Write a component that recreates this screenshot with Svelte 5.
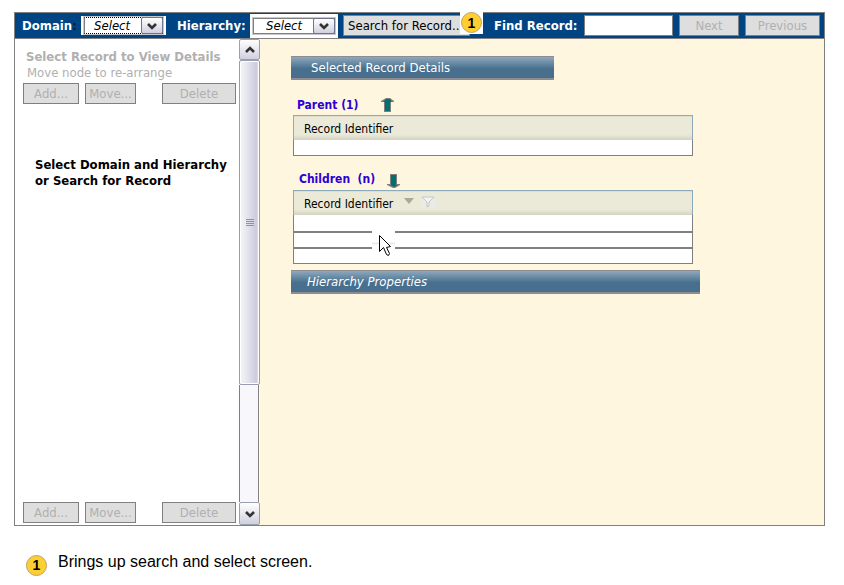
<script>
  let domain = $state('Select');
  let hierarchy = $state('Select');
  let query = $state('');
  const childRows = [1, 2, 3];
</script>

{#snippet chevron(up)}
  <svg class="chevron" viewBox="0 0 10 8" width="10" height="8" aria-hidden="true">
    <path d={up ? 'M1 6 L5 2 L9 6' : 'M1 2 L5 6 L9 2'} fill="none" stroke="#333" stroke-width="2.6" />
  </svg>
{/snippet}

{#snippet actions()}
  <div class="actions">
    <button class="btn add" disabled>Add...</button>
    <button class="btn move" disabled>Move...</button>
    <button class="btn delete" disabled>Delete</button>
  </div>
{/snippet}

<div class="page">
  <div class="window">
    <header>
      <label class="domain-label" for="domain">Domain<span class="colon">:</span></label>
      <div class="picker focused">
        <select id="domain" bind:value={domain}><option>Select</option></select>
        <span class="drop">{@render chevron(false)}</span>
      </div>
      <label class="hier-label" for="hierarchy">Hierarchy:</label>
      <div class="picker tall">
        <select id="hierarchy" bind:value={hierarchy}><option>Select</option></select>
        <span class="drop">{@render chevron(false)}</span>
      </div>
      <div class="search">
        <button class="btn search-btn">Search for Record..</button>
        <span class="patch"><span class="badge">1</span></span>
      </div>
      <label class="find-label" for="find">Find Record:</label>
      <input id="find" type="text" bind:value={query} />
      <button class="btn next" disabled>Next</button>
      <button class="btn previous" disabled>Previous</button>
    </header>

    <div class="body">
      <aside>
        <h2>Select Record to View Details</h2>
        <p class="hint">Move node to re-arrange</p>
        {@render actions()}
        <p class="prompt">Select Domain and Hierarchy<br />or Search for Record</p>
        {@render actions()}
      </aside>
      <div class="scrollbar">
        <button class="step" aria-label="Scroll up">{@render chevron(true)}</button>
        <div class="thumb"><span></span><span></span><span></span><span></span></div>
        <div class="track"></div>
        <button class="step down" aria-label="Scroll down">{@render chevron(false)}</button>
      </div>

      <main>
        <h3 class="bar details">Selected Record Details</h3>

        <h4>
          Parent (1)
          <svg class="up" width="14" height="14" viewBox="0 0 14 14" aria-hidden="true">
            <path d="M4 4 H3 V14 H10 V4 H13 V3 L9 0 H5 L0 3 V4Z" fill="#808080" />
            <path d="M4 4 H2 L5 1 H9 L11 4 H9 V13 H4Z" fill="#007070" />
          </svg>
        </h4>
        <table>
          <thead><tr><th>Record Identifier</th></tr></thead>
          <tbody><tr><td></td></tr></tbody>
        </table>

        <h4 class="children">
          Children&nbsp; (n)
          <svg class="downarrow" width="14" height="14" viewBox="0 0 14 14" aria-hidden="true">
            <path d="M3 0 H10 V10 H13 V11 L8 14 H6 L0 11 V10 H3Z" fill="#808080" />
            <path d="M4 1 H9 V11 H11 L7 13 L3 11 H4Z" fill="#007070" />
          </svg>
        </h4>
        <div class="grid">
          <table>
            <thead>
              <tr>
                <th>
                  Record Identifier
                  <svg class="sort" width="10" height="6" viewBox="0 0 10 6" aria-hidden="true">
                    <path d="M0 0 H10 L5 6Z" fill="#aaa999" />
                  </svg>
                  <svg class="filter" width="14" height="12" viewBox="0 0 14 12" aria-hidden="true">
                    <rect width="14" height="12" fill="#ebebe6" />
                    <path d="M1 1 H13 L8 6 V10 L6 11 V6Z" fill="#f4f4f2" stroke="#c4c4c4" />
                  </svg>
                </th>
              </tr>
            </thead>
            <tbody>
              {#each childRows as row (row)}
                <tr><td></td></tr>
              {/each}
            </tbody>
          </table>
          <svg class="cursor" width="23" height="27" viewBox="0 0 23 27" aria-hidden="true">
            <rect width="23" height="27" fill="#fff" />
            <path d="M0 13.5 H23" stroke="#e9ebeb" stroke-width="2" />
            <path d="M7.5 5.5 V21.5 L11.5 17.5 L14.5 24.5 L16.5 25.5 L17.5 23.5 L14.5 17.5 L18.5 16.5Z" fill="#fff" stroke="#000" />
          </svg>
        </div>

        <h3 class="bar properties">Hierarchy Properties</h3>
      </main>
    </div>
  </div>

  <footer>
    <span class="badge">1</span>
    <p>Brings up search and select screen.</p>
  </footer>
</div>

<style>
  :global(body) {
    background: #fff;
  }
  .page {
    box-sizing: border-box;
    min-height: 100vh;
    display: flex;
    flex-direction: column;
    padding: 12px 19px 7px 14px;
    font: 13px/16px 'DejaVu Sans Condensed', 'DejaVu Sans', sans-serif;
    color: #000;
  }
  h2, h3, h4, p {
    margin: 0;
  }
  button, input, select {
    box-sizing: border-box;
    margin: 0;
    font: inherit;
    color: inherit;
  }
  .window {
    flex: 1;
    display: flex;
    flex-direction: column;
    border: 1px solid #808080;
  }
  header {
    height: 25px;
    display: flex;
    align-items: center;
    background: #004484;
    border-bottom: 1px solid #808080;
  }
  label {
    font-weight: bold;
    font-size: 13px;
    color: #fff;
    white-space: nowrap;
    flex: none;
  }
  .domain-label {
    width: 59px;
    padding-left: 7px;
  }
  .colon {
    color: #101828;
  }
  .hier-label {
    width: 73px;
    padding-left: 11px;
  }
  .find-label {
    width: 90px;
    padding-left: 11px;
  }
  .picker {
    flex: none;
    box-sizing: border-box;
    width: 85px;
    height: 19px;
    padding: 1px 3px;
    display: grid;
    grid-template-columns: 1fr 22px;
    background: #fff;
  }
  .picker.tall {
    width: 88px;
    height: 24px;
    padding: 4px 3px;
  }
  select {
    appearance: none;
    grid-area: 1 / 1 / 2 / 3;
    width: 100%;
    height: 100%;
    padding: 0 22px 0 9px;
    border: 1px solid #808080;
    border-radius: 0;
    outline: 1px solid #c8c8cc;
    background: #fff;
    font-style: italic;
    line-height: 14px;
  }
  .tall select {
    padding-left: 12px;
  }
  .focused select {
    border-top: 1px dotted #000;
    border-bottom: 1px dotted #000;
  }
  .drop {
    grid-area: 1 / 2 / 2 / 3;
    z-index: 1;
    pointer-events: none;
    display: grid;
    place-items: center;
    border: 1px solid #6f7590;
    border-radius: 2px;
    background: linear-gradient(#fff, #d0d0e0);
  }
  .btn {
    flex: none;
    height: 21px;
    padding: 0;
    border: 1px solid #808080;
    background: #dedede;
    line-height: 16px;
    white-space: nowrap;
  }
  .btn:disabled {
    color: #b0b0b0;
  }
  .search {
    flex: none;
    display: flex;
    position: relative;
    width: 140px;
    padding-left: 5px;
  }
  .search-btn {
    width: 127px;
    padding-left: 4px;
    text-align: left;
  }
  .patch {
    position: absolute;
    right: 0;
    top: -3px;
    width: 23px;
    height: 22px;
    padding-left: 1px;
    box-sizing: border-box;
    background: #fff;
  }
  .badge {
    flex: none;
    box-sizing: border-box;
    display: grid;
    place-items: center;
    width: 21px;
    height: 21px;
    border: 1px solid #b9a468;
    border-radius: 50%;
    background: #ffcf31;
    font: bold 14px/18px 'Liberation Sans', Arial, sans-serif;
  }
  input {
    flex: 1;
    min-width: 40px;
    height: 21px;
    padding: 0 4px;
    border: 1px solid #808080;
    border-radius: 0;
    background: #fff;
  }
  .next {
    width: 60px;
    margin-left: 6px;
  }
  .previous {
    width: 75px;
    margin: 0 4px 0 6px;
  }
  .body {
    flex: 1;
    display: flex;
  }
  aside {
    flex: none;
    box-sizing: border-box;
    width: 224px;
    display: flex;
    flex-direction: column;
    padding: 10px 3px 2px 8px;
    background: #fff;
  }
  h2 {
    padding-left: 3px;
    font-size: 13px;
    line-height: 16px;
    color: #b0b0b0;
    white-space: nowrap;
  }
  .hint {
    padding-left: 4px;
    color: #b0b0b0;
  }
  .actions {
    display: flex;
    gap: 6px;
    margin-top: 2px;
  }
  .add {
    width: 56px;
  }
  .move {
    width: 51px;
  }
  .delete {
    width: 74px;
    margin-left: auto;
  }
  .prompt {
    flex: 1;
    padding: 53px 0 0 12px;
    font-weight: bold;
    white-space: nowrap;
  }
  .scrollbar {
    flex: none;
    width: 21px;
    display: flex;
    flex-direction: column;
  }
  .step {
    flex: none;
    width: 21px;
    height: 21px;
    padding: 0;
    display: grid;
    place-items: center;
    border: 1px solid #98a0b4;
    border-radius: 2px;
    background: linear-gradient(#fff, #d0d0de);
  }
  .down {
    height: 23px;
  }
  .thumb {
    flex: 324;
    box-sizing: border-box;
    display: flex;
    flex-direction: column;
    align-items: center;
    justify-content: center;
    gap: 1px;
    border: 1px solid #9a9cb0;
    border-radius: 2px;
    box-shadow: inset 0 0 0 1px #fff;
    background: linear-gradient(90deg, #f6f6f8, #e4e4ee 40%, #cbcbdd 85%, #e6e6f0);
  }
  .thumb span {
    width: 8px;
    height: 1px;
    background: #8c90a8;
  }
  .track {
    flex: 117;
    width: 18px;
    border: solid #808080;
    border-width: 0 1px;
    background: #f8f8fc;
  }
  main {
    flex: 1;
    min-width: 0;
    padding: 17px 31px 0;
    background: #fff6df;
  }
  .bar {
    box-sizing: border-box;
    height: 24px;
    border: solid #8c8c92;
    border-width: 1px 0 2px;
    background: linear-gradient(#8ea8bc, #48708e 55%);
    color: #fff;
    font-weight: normal;
    font-size: 13px;
    line-height: 22px;
  }
  .details {
    max-width: 263px;
    padding-left: 20px;
  }
  .properties {
    max-width: 409px;
    margin-top: 6px;
    padding-left: 16px;
    font-style: italic;
  }
  h4 {
    display: flex;
    align-items: center;
    height: 16px;
    margin-top: 17px;
    padding-left: 6px;
    font-size: 12px;
    color: #2a00d4;
  }
  .children {
    margin-top: 15px;
    padding-left: 8px;
  }
  .up {
    margin-left: 22px;
  }
  .downarrow {
    margin: 3px 0 0 12px;
  }
  table {
    width: 100%;
    max-width: 400px;
    margin: 2px 0 0 2px;
    border-collapse: collapse;
    background: #fff;
  }
  th {
    box-sizing: border-box;
    height: 24px;
    padding: 3px 0 0 10px;
    border: 1px solid #8caabc;
    border-bottom: 0;
    background: linear-gradient(#ebead9 75%, #d2d0c0);
    font-weight: normal;
    font-size: 12px;
    line-height: 16px;
    text-align: left;
  }
  td {
    box-sizing: border-box;
    height: 16px;
    padding: 0;
    border: 1px solid #808080;
    border-top: 0;
  }
  .grid {
    position: relative;
  }
  .grid table {
    margin-top: 3px;
  }
  .grid td {
    border-bottom-width: 2px;
  }
  .grid tr:first-child td {
    height: 17px;
  }
  .grid tr:last-child td {
    border-bottom-width: 1px;
  }
  .sort {
    margin: 0 4px 4px 7px;
  }
  .cursor {
    position: absolute;
    left: 81px;
    top: 40px;
  }
  footer {
    display: flex;
    align-items: center;
    gap: 11px;
    padding: 26px 0 0 12px;
  }
  footer p {
    padding-bottom: 6px;
    font: 16px/20px 'Liberation Sans', Arial, sans-serif;
  }
</style>
